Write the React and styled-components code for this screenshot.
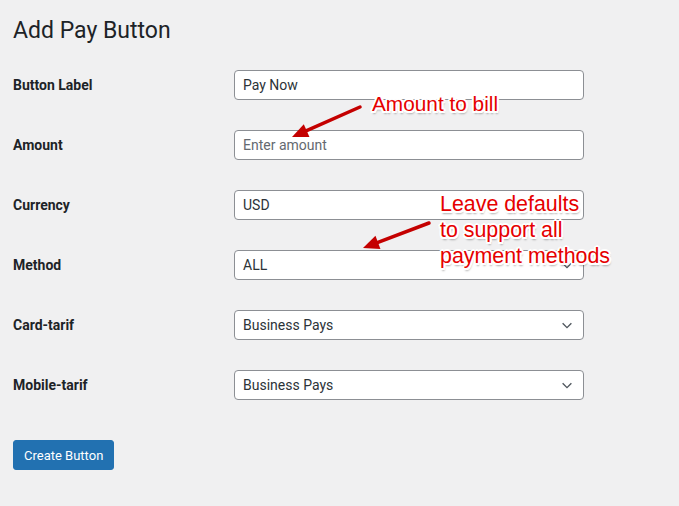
import { Fragment } from "react"
import styled, { createGlobalStyle } from "styled-components"

const Global = createGlobalStyle`
    html, body {
        margin: 0;
        background: #f0f0f1;
    }
    body {
        font-family: Roboto, "Liberation Sans", sans-serif;
        color: #1d2327;
    }
`

const Page = styled.div`
    position: relative;
    width: 679px;
    height: 506px;
    padding: 0 13px;
    box-sizing: border-box;
    overflow: hidden;
`

const Title = styled.h1`
    margin: 0;
    padding-top: 16px;
    font-size: 23px;
    font-weight: 400;
    line-height: 30px;
    color: #1d2327;
`

const Form = styled.div`
    display: grid;
    grid-template-columns: 221px 350px;
    grid-auto-rows: 30px;
    row-gap: 30px;
    margin-top: 24px;
    align-items: center;
`

const Label = styled.label`
    font-size: 14px;
    font-weight: 700;
    color: #1d2327;
`

const Field = styled.div`
    position: relative;
    height: 30px;
    box-sizing: border-box;
    border: 1px solid #8c8f94;
    border-radius: 4px;
    background: #fff;
    padding: 0 8px;
    display: flex;
    align-items: center;
    justify-content: space-between;
    font-size: 14px;
    color: ${p => (p.$placeholder ? "#646970" : "#2c3338")};
`

const Chevron = styled.svg`
    width: 14px;
    height: 14px;
    margin-right: 1px;
`

const Submit = styled.button`
    margin-top: 40px;
    height: 30px;
    padding: 0 10px;
    border: 1px solid #2271b1;
    border-radius: 3px;
    background: #2271b1;
    color: #fff;
    font-family: Roboto, "Liberation Sans", sans-serif;
    font-size: 13px;
`

const Note = styled.div`
    position: absolute;
    left: ${p => p.$x}px;
    top: ${p => p.$y}px;
    font-family: "Liberation Sans", Arial, sans-serif;
    font-size: ${p => p.$size}px;
    line-height: 26px;
    color: #e60000;
    white-space: pre;
    text-shadow:
        -2px 0 0 #fff, 2px 0 0 #fff, 0 -2px 0 #fff, 0 2px 0 #fff,
        -1.5px -1.5px 0 #fff, 1.5px -1.5px 0 #fff, -1.5px 1.5px 0 #fff, 1.5px 1.5px 0 #fff,
        1px 3px 2px rgba(0, 0, 0, 0.35);
`

const Overlay = styled.svg`
    position: absolute;
    left: 0;
    top: 0;
    pointer-events: none;
`

const ArrowDown = () => (
    <Chevron viewBox="0 0 16 16">
        <path d="M3 6l5 5 5-5" fill="none" stroke="#50575e" strokeWidth="1.6" />
    </Chevron>
)

const rows = [
    { label: "Button Label", value: "Pay Now" },
    { label: "Amount", value: "Enter amount", placeholder: true },
    { label: "Currency", value: "USD" },
    { label: "Method", value: "ALL", select: true },
    { label: "Card-tarif", value: "Business Pays", select: true },
    { label: "Mobile-tarif", value: "Business Pays", select: true },
]

function Arrow({ x1, y1, x2, y2 }) {
    const a = Math.atan2(y2 - y1, x2 - x1)
    const len = 16
    const w = 7
    const bx = x2 - Math.cos(a) * len
    const by = y2 - Math.sin(a) * len
    const px = -Math.sin(a) * w
    const py = Math.cos(a) * w
    return (
        <g>
            <line x1={x1} y1={y1} x2={bx} y2={by} stroke="#c40000" strokeWidth="3.5" strokeLinecap="round" />
            <polygon points={`${x2},${y2} ${bx + px},${by + py} ${bx - px},${by - py}`} fill="#c40000" />
        </g>
    )
}

export default function App() {
    return (
        <>
            <Global />
            <Page>
                <Title>Add Pay Button</Title>
                <Form>
                    {rows.map(r => (
                        <Fragment key={r.label}>
                            <Label>{r.label}</Label>
                            <Field $placeholder={r.placeholder}>
                                <span>{r.value}</span>
                                {r.select && <ArrowDown />}
                            </Field>
                        </Fragment>
                    ))}
                </Form>
                <Submit>Create Button</Submit>

                <Overlay width="679" height="506">
                    <Arrow x1={360} y1={107} x2={292} y2={137} />
                    <Arrow x1={429} y1={223} x2={363} y2={248} />
                </Overlay>
                <Note $x={372} $y={91} $size={20.8}>Amount to bill</Note>
                <Note $x={440} $y={191} $size={21.4}>{"Leave defaults\nto support all\npayment methods"}</Note>
            </Page>
        </>
    )
}
